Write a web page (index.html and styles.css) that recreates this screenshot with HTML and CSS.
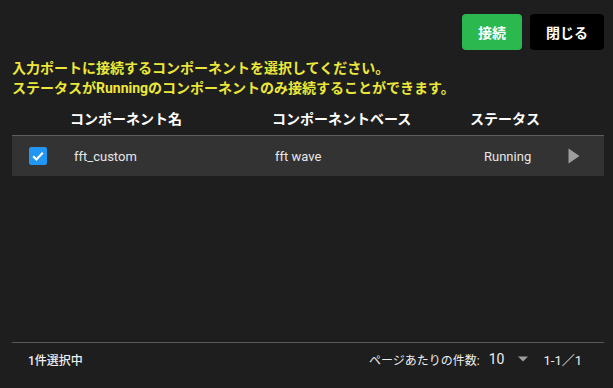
FILE: index.html
```html
<!DOCTYPE html>
<html lang="ja">
<head>
<meta charset="utf-8">
<link rel="stylesheet" href="styles.css">
</head>
<body>
<div class="page">
  <div class="actions">
    <button class="btn btn-connect">接続</button>
    <button class="btn btn-close">閉じる</button>
  </div>
  <div class="msg">
    <div>入力ポートに接続するコンポーネントを選択してください。</div>
    <div>ステータスがRunningのコンポーネントのみ接続することができます。</div>
  </div>
  <div class="table">
    <div class="row head">
      <div class="c1"></div>
      <div class="c2">コンポーネント名</div>
      <div class="c3">コンポーネントベース</div>
      <div class="c4">ステータス</div>
      <div class="c5"></div>
    </div>
    <div class="row body">
      <div class="c1"><span class="check"><svg width="18" height="18" viewBox="0 0 18 18"><path d="M4.2 9.3l3.2 3.1 6.4-6.6" fill="none" stroke="#fff" stroke-width="2.1"/></svg></span></div>
      <div class="c2">fft_custom</div>
      <div class="c3">fft wave</div>
      <div class="c4">Running</div>
      <div class="c5"><svg width="12" height="16" viewBox="0 0 12 16"><path d="M0.5 0.5L11.5 8L0.5 15.5Z" fill="#9e9e9e"/></svg></div>
    </div>
  </div>
  <div class="footer">
    <div class="sel">1件選択中</div>
    <div class="pager">
      <span class="per">ページあたりの件数:</span>
      <span class="num">10</span>
      <svg class="dd" width="10" height="6" viewBox="0 0 10 6"><path d="M0 0.5h10L5 5.5Z" fill="#9e9e9e"/></svg>
      <span class="range">1-1／1</span>
    </div>
  </div>
</div>
</body>
</html>
```
FILE: styles.css
```css
html, body {
  margin: 0;
  padding: 0;
  background: #1e1e1e;
}
body {
  font-family: Roboto, "Noto Sans CJK JP", sans-serif;
  color: #eeeeee;
}
.page {
  height: 388px;
  display: flex;
  flex-direction: column;
}
.actions {
  display: flex;
  justify-content: flex-end;
  gap: 8px;
  padding: 14px 9px 0 0;
}
.btn {
  height: 36px;
  border: none;
  border-radius: 4px;
  color: #ffffff;
  font-family: Roboto, "Noto Sans CJK JP", sans-serif;
  font-size: 14px;
  font-weight: 700;
  padding: 0;
}
.btn-connect {
  width: 60px;
  background: #2ab84f;
}
.btn-close {
  width: 74px;
  background: #000000;
}
.msg {
  margin-top: 8px;
  padding-left: 12px;
  color: #ece83a;
  font-size: 14px;
  font-weight: 700;
  line-height: 20px;
}
.table {
  flex: 1;
  margin: 0 9px 0 12px;
}
.row {
  display: grid;
  grid-template-columns: 46px 200px 200px 98px 1fr;
  align-items: center;
}
.head {
  border-bottom: 1px solid #5e5e5e;
  font-size: 14px;
  font-weight: 700;
  color: #ffffff;
  padding-top: 2px;
  box-sizing: border-box;
  height: 38px;
}
.head .c2, .head .c4 {
  padding-left: 12px;
}
.head .c3 { padding-left: 14px; }
.body {
  height: 40px;
  background: #333333;
  font-size: 13px;
  color: #e6e6e6;
}
.body .c1 {
  padding-left: 17px;
  display: flex;
}
.check {
  width: 18px;
  height: 18px;
  border-radius: 2px;
  background: #2196f3;
  display: block;
}
.check svg { display: block; }
.body .c2 { padding-left: 16px; }
.body .c3 { padding-left: 17px; }
.body .c4 { padding-left: 26px; }
.body .c5 {
  padding-left: 12px;
  display: flex;
}
.footer {
  margin: 0 9px 13px 12px;
  border-top: 1px solid #5a5a5a;
  height: 32px;
  display: flex;
  align-items: center;
  justify-content: space-between;
  font-size: 12px;
  color: #eeeeee;
}
.sel {
  padding-left: 16px;
  font-weight: 500;
}
.pager {
  display: flex;
  align-items: center;
  padding-right: 22px;
}
.per {
  margin-right: 9px;
}
.num {
  font-size: 14px;
}
.dd {
  margin-left: 14px;
  margin-right: 15px;
}
.range {
  font-size: 13px;
}
```
